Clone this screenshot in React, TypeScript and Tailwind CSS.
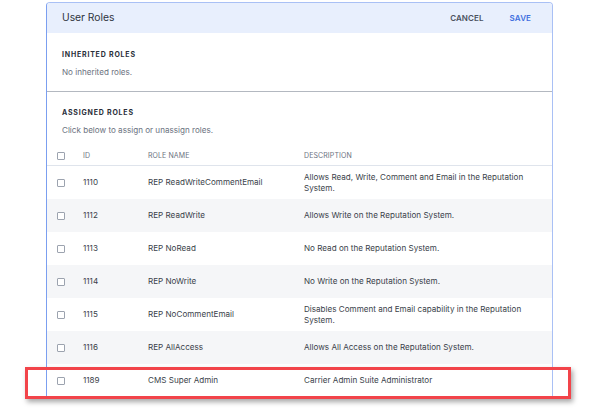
const roles = [
  { id: "1110", name: "REP ReadWriteCommentEmail", desc: "Allows Read, Write, Comment and Email in the Reputation System." },
  { id: "1112", name: "REP ReadWrite", desc: "Allows Write on the Reputation System." },
  { id: "1113", name: "REP NoRead", desc: "No Read on the Reputation System." },
  { id: "1114", name: "REP NoWrite", desc: "No Write on the Reputation System." },
  { id: "1115", name: "REP NoCommentEmail", desc: "Disables Comment and Email capability in the Reputation System." },
  { id: "1116", name: "REP AllAccess", desc: "Allows All Access on the Reputation System." },
  { id: "1189", name: "CMS Super Admin", desc: "Carrier Admin Suite Administrator" },
];

function Box() {
  return <span className="block w-[8px] h-[8px] border border-[#9ca3af] rounded-[1px] bg-white" />;
}

export default function App() {
  return (
    <div className="relative w-[597px] h-[411px] bg-white overflow-hidden" style={{ fontFamily: "Inter, 'Noto Sans', sans-serif" }}>
      <div className="ml-[46px] mt-[2px] w-[507px] border border-[#a9c0f5] border-l-[#7b9ff0] rounded-t-[4px] overflow-hidden">
        <div className="h-[30px] bg-[#e8effd] flex items-center justify-between pl-[15px] pr-[21px]">
          <span className="text-[10.3px] text-[#2f3440]">User Roles</span>
          <div className="flex items-center gap-[26px] text-[8px] font-semibold tracking-[0.1px]">
            <span className="text-[#4b5260]">CANCEL</span>
            <span className="text-[#3f6fe0]">SAVE</span>
          </div>
        </div>

        <div className="px-[15px] pt-[17px] pb-[14px] border-b border-[#b3b8c0]">
          <div className="text-[7px] font-bold tracking-[0.8px] text-[#2a2f3a] leading-[10px]">INHERITED ROLES</div>
          <div className="mt-[7px] text-[8.1px] text-[#6b7280] leading-[10px]">No inherited roles.</div>
        </div>

        <div className="px-[15px] pt-[16px] pb-[12px]">
          <div className="text-[7px] font-bold tracking-[0.8px] text-[#2a2f3a] leading-[10px]">ASSIGNED ROLES</div>
          <div className="mt-[7px] text-[8.1px] text-[#6b7280] leading-[10px]">Click below to assign or unassign roles.</div>
        </div>

        <div className="flex items-center h-[19px] pl-[10px] border-b border-[#dfe4ec] text-[7px] text-[#6b7280] tracking-[0.1px]">
          <div className="w-[26px]"><Box /></div>
          <div className="w-[65px]">ID</div>
          <div className="w-[156px]">ROLE NAME</div>
          <div className="flex-1">DESCRIPTION</div>
        </div>

        {roles.map((r, i) => (
          <div key={r.id} className={`flex items-center h-[33px] pl-[10px] text-[8.1px] text-[#3a3f4a] ${i % 2 === 1 ? "bg-[#f5f6f8]" : "bg-white"}`}>
            <div className="w-[26px]"><Box /></div>
            <div className="w-[65px]">{r.id}</div>
            <div className="w-[156px]">{r.name}</div>
            <div className="w-[225px] leading-[11px]">{r.desc}</div>
          </div>
        ))}
      </div>

      <div className="absolute left-[25px] top-[367px] w-[546px] h-[32px] border-[3px] border-[#f2444a] shadow-[2px_3px_5px_rgba(0,0,0,0.35)]" />
    </div>
  );
}
